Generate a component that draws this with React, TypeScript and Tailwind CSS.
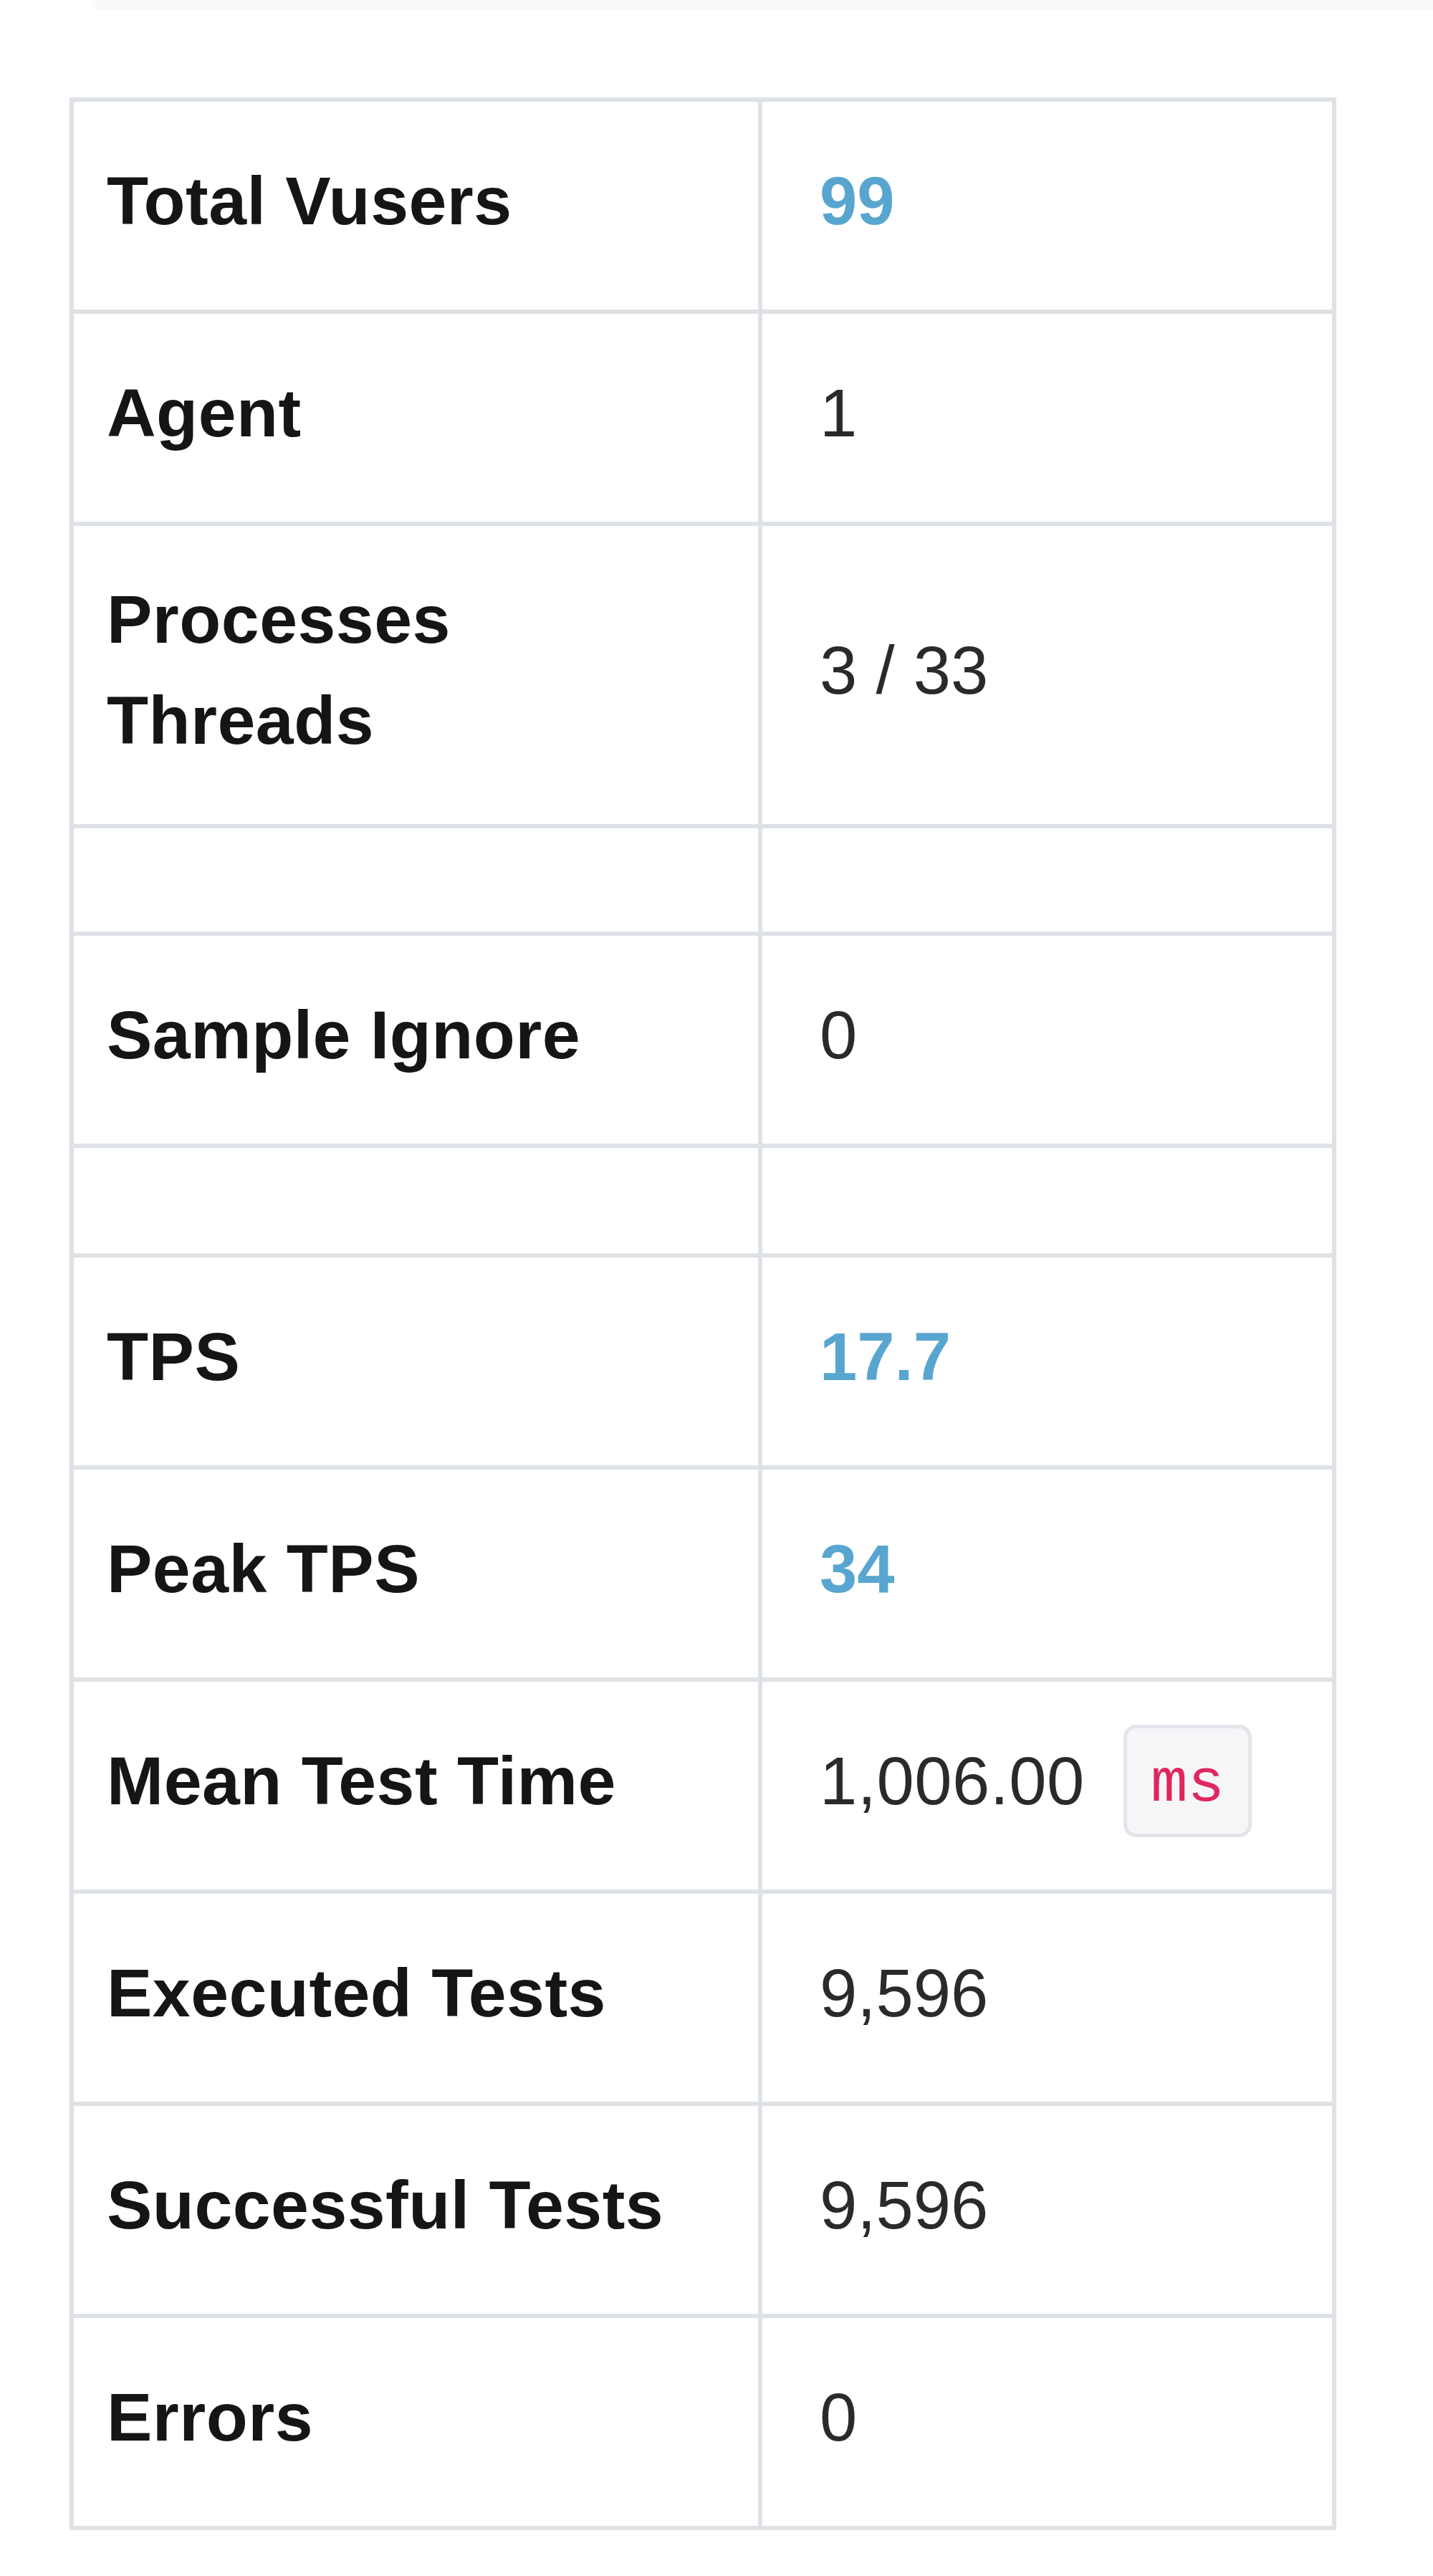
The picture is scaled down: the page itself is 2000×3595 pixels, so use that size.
import type { ReactNode } from 'react';

type StatRow = {
  label?: ReactNode;
  value?: ReactNode;
  height: string;
  accent?: boolean;
};

// heights include the 6px top rule of each row (border-box)
const rows: StatRow[] = [
  { label: 'Total Vusers', value: '99', height: 'h-[290px]', accent: true },
  { label: 'Agent', value: '1', height: 'h-[296px]' },
  {
    label: (
      <>
        Processes
        <br />
        Threads
      </>
    ),
    value: '3 / 33',
    height: 'h-[422px]'
  },
  { height: 'h-[150px]' },
  { label: 'Sample Ignore', value: '0', height: 'h-[296px]' },
  { height: 'h-[153px]' },
  { label: 'TPS', value: '17.7', height: 'h-[296px]', accent: true },
  { label: 'Peak TPS', value: '34', height: 'h-[296px]', accent: true },
  {
    label: 'Mean Test Time',
    value: (
      <>
        <span className="tracking-[0.5px]">1,006.00</span>
        <code className="ml-[54px] inline-flex h-[157px] items-center rounded-[18px] border-[5px] border-[#e4e4ea] bg-[#f6f6f8] px-[33px] pt-[10px] font-['Liberation_Mono',monospace] text-[86px] leading-none text-[#e0265e]">
          ms
        </code>
      </>
    ),
    height: 'h-[296px]'
  },
  { label: 'Executed Tests', value: '9,596', height: 'h-[296px]' },
  { label: 'Successful Tests', value: '9,596', height: 'h-[296px]' },
  { label: 'Errors', value: '0', height: 'h-[296px]' }
];

export default function App(): JSX.Element {
  return (
    <div className="min-h-[3595px] bg-white font-['Liberation_Sans',Arial,sans-serif]">
      <div className="ml-[128px] h-[13px] bg-[#fafafa]" />
      <div className="ml-[97px] mt-[123px] w-[1768px] border-[6px] border-[#dee2e6]">
        {rows.map((row, i) => (
          <div key={i} className={`flex ${row.height} ${i > 0 ? 'border-t-[6px] border-[#dee2e6]' : ''}`}>
            <div className="flex w-[961px] shrink-0 items-center border-r-[6px] border-[#dee2e6] pb-[14px] pl-[46px] text-[95px] font-bold leading-[141px] tracking-[0.5px] text-[#151515]">
              {row.label && <div>{row.label}</div>}
            </div>
            <div
              className={`flex flex-1 items-center pb-[14px] pl-[80px] text-[94px] leading-[141px] ${
                row.accent ? 'font-bold text-[#58a6d0]' : 'text-[#2a2a2a]'
              }`}
            >
              {row.value}
            </div>
          </div>
        ))}
      </div>
    </div>
  );
}
